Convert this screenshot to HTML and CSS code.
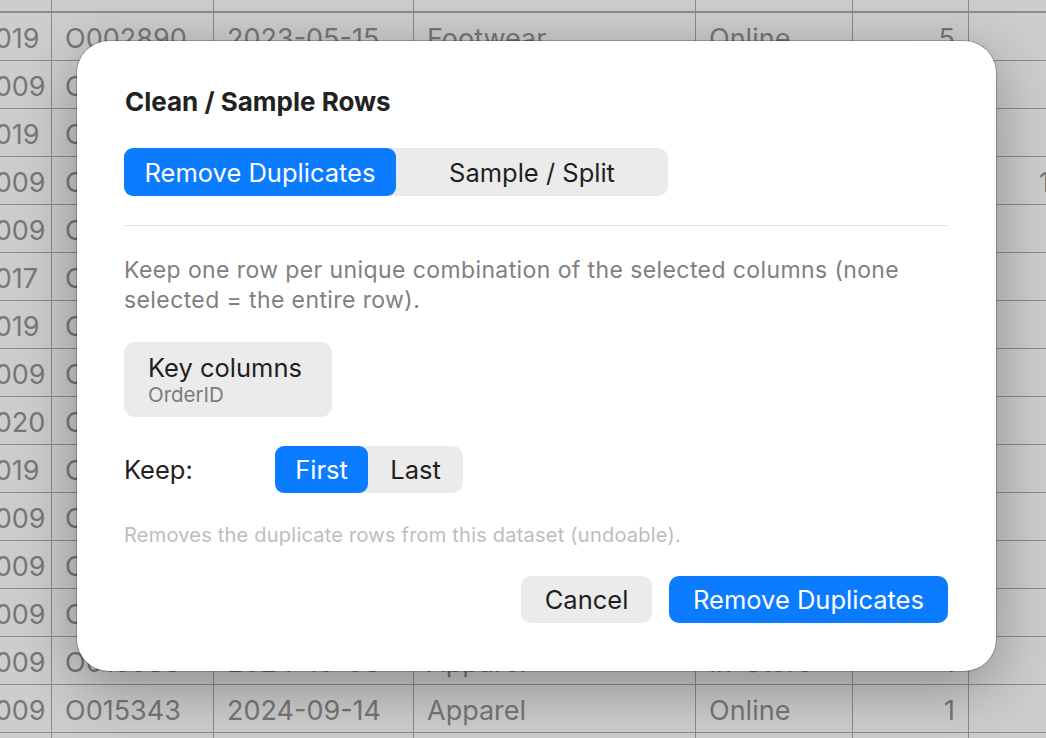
FILE: index.html
```html
<!DOCTYPE html>
<html lang="en">
<head>
<meta charset="utf-8">
<title>Clean / Sample Rows</title>
<link rel="stylesheet" href="styles.css">
</head>
<body>
<div class="backdrop">
  <div class="sheet">
    <div class="row thick"><div class="c r">C1020</div><div class="c">O010866</div><div class="c">2024-12-02</div><div class="c">Home</div><div class="c">Online</div><div class="c r">1</div><div class="c"></div></div>
    <div class="row"><div class="c r">C1019</div><div class="c">O002890</div><div class="c">2023-05-15</div><div class="c">Footwear</div><div class="c">Online</div><div class="c r">5</div><div class="c"></div></div>
    <div class="row"><div class="c r">C1009</div><div class="c">O004512</div><div class="c">2023-07-02</div><div class="c">Home</div><div class="c">Online</div><div class="c r">2</div><div class="c"></div></div>
    <div class="row"><div class="c r">C1019</div><div class="c">O005230</div><div class="c">2023-08-11</div><div class="c">Apparel</div><div class="c">In-Store</div><div class="c r">1</div><div class="c"></div></div>
    <div class="row"><div class="c r">C1009</div><div class="c">O006114</div><div class="c">2023-09-20</div><div class="c">Footwear</div><div class="c">Online</div><div class="c r">3</div><div class="c far">1</div></div>
    <div class="row"><div class="c r">C1009</div><div class="c">O007021</div><div class="c">2023-10-05</div><div class="c">Home</div><div class="c">Online</div><div class="c r">1</div><div class="c"></div></div>
    <div class="row"><div class="c r">C1017</div><div class="c">O008340</div><div class="c">2023-11-18</div><div class="c">Apparel</div><div class="c">Online</div><div class="c r">2</div><div class="c"></div></div>
    <div class="row"><div class="c r">C1019</div><div class="c">O009112</div><div class="c">2024-01-09</div><div class="c">Home</div><div class="c">In-Store</div><div class="c r">1</div><div class="c"></div></div>
    <div class="row"><div class="c r">C1009</div><div class="c">O010254</div><div class="c">2024-02-14</div><div class="c">Footwear</div><div class="c">Online</div><div class="c r">4</div><div class="c"></div></div>
    <div class="row"><div class="c r">C1020</div><div class="c">O011087</div><div class="c">2024-03-22</div><div class="c">Apparel</div><div class="c">Online</div><div class="c r">1</div><div class="c"></div></div>
    <div class="row"><div class="c r">C1019</div><div class="c">O012330</div><div class="c">2024-04-30</div><div class="c">Home</div><div class="c">Online</div><div class="c r">2</div><div class="c"></div></div>
    <div class="row"><div class="c r">C1009</div><div class="c">O013019</div><div class="c">2024-05-17</div><div class="c">Apparel</div><div class="c">In-Store</div><div class="c r">1</div><div class="c"></div></div>
    <div class="row"><div class="c r">C1009</div><div class="c">O013876</div><div class="c">2024-06-25</div><div class="c">Footwear</div><div class="c">Online</div><div class="c r">3</div><div class="c"></div></div>
    <div class="row"><div class="c r">C1009</div><div class="c">O014402</div><div class="c">2024-08-08</div><div class="c">Home</div><div class="c">Online</div><div class="c r">1</div><div class="c"></div></div>
    <div class="row"><div class="c r">C1009</div><div class="c">O015086</div><div class="c">2024-10-06</div><div class="c">Apparel</div><div class="c">In-Store</div><div class="c r">1</div><div class="c"></div></div>
    <div class="row"><div class="c r">C1009</div><div class="c">O015343</div><div class="c">2024-09-14</div><div class="c">Apparel</div><div class="c">Online</div><div class="c r">1</div><div class="c"></div></div>
    <div class="row"><div class="c r">C1009</div><div class="c">O015910</div><div class="c">2024-11-02</div><div class="c">Home</div><div class="c">Online</div><div class="c r">2</div><div class="c"></div></div>
  </div>

  <div class="dialog" role="dialog" aria-label="Clean / Sample Rows">
    <h1 class="title">Clean / Sample Rows</h1>
    <div class="seg seg-main">
      <div class="seg-item on">Remove Duplicates</div>
      <div class="seg-item">Sample / Split</div>
    </div>
    <div class="divider"></div>
    <p class="desc">Keep one row per unique combination of the selected columns (none selected = the entire row).</p>
    <div class="keybtn">
      <span class="keybtn-title">Key columns</span>
      <span class="keybtn-sub">OrderID</span>
    </div>
    <div class="keep">
      <span class="keep-label">Keep:</span>
      <div class="seg seg-keep">
        <div class="seg-item on">First</div>
        <div class="seg-item">Last</div>
      </div>
    </div>
    <p class="note">Removes the duplicate rows from this dataset (undoable).</p>
    <div class="actions">
      <div class="btn btn-cancel">Cancel</div>
      <div class="btn btn-primary">Remove Duplicates</div>
    </div>
  </div>
</div>
</body>
</html>
```

FILE: styles.css
```css
html, body {
  margin: 0;
  padding: 0;
  width: 1046px;
  height: 738px;
  overflow: hidden;
}

body {
  font-family: "Inter", "Liberation Sans", sans-serif;
  background: #cbcbcb;
}

.backdrop {
  position: relative;
  width: 1046px;
  height: 738px;
  overflow: hidden;
  background: #cdcdcd;
}

/* background table */
.sheet {
  margin-top: -35px;
  margin-left: -49px;
}

.row {
  display: grid;
  grid-template-columns: 101px 162px 200px 282px 157px 116px 240px;
  height: 48px;
  box-sizing: border-box;
  border-bottom: 1px solid #8b8b8b;
}

.row.thick {
  border-bottom-width: 2px;
}

.c {
  box-sizing: border-box;
  border-right: 1px solid #8b8b8b;
  padding: 2px 13px 0 13px;
  font-size: 27px;
  line-height: 47px;
  color: #777777;
  white-space: nowrap;
  overflow: hidden;
}

.c.r {
  text-align: right;
}

.c.far {
  padding-left: 70px;
}

/* dialog */
.dialog {
  position: absolute;
  left: 77px;
  top: 41px;
  width: 919px;
  box-sizing: border-box;
  padding: 46px 48px 48px 47px;
  background: #ffffff;
  border-radius: 32px;
  box-shadow: 0 0 0 1px rgba(0, 0, 0, 0.22), 0 16px 60px rgba(0, 0, 0, 0.32);
  display: flex;
  flex-direction: column;
  align-items: flex-start;
  color: #1f1f1f;
}

.title {
  margin: 0 0 0 1px;
  font-size: 26px;
  line-height: 30px;
  font-weight: 700;
  color: #222222;
}

.seg {
  display: flex;
  background: #ebebeb;
  border-radius: 10px;
}

.seg-item {
  display: flex;
  align-items: center;
  justify-content: center;
  font-size: 25.5px;
  color: #1f1f1f;
  border-radius: 9px;
}

.seg-item.on {
  background: #0b7bff;
  color: #ffffff;
}

.seg-main {
  margin-top: 31px;
  height: 48px;
}

.seg-main .seg-item {
  width: 272px;
}

.divider {
  align-self: stretch;
  margin-top: 29px;
  height: 1px;
  background: #e0e0e0;
}

.desc {
  margin: 29px 0 0 0;
  font-size: 23px;
  line-height: 30px;
  letter-spacing: 0.4px;
  color: #808080;
  max-width: 824px;
}

.keybtn {
  margin-top: 27px;
  height: 75px;
  box-sizing: border-box;
  padding: 0 30px 0 24px;
  background: #ebebeb;
  border-radius: 11px;
  display: flex;
  flex-direction: column;
  justify-content: center;
}

.keybtn-title {
  font-size: 25.5px;
  line-height: 30px;
  color: #1f1f1f;
}

.keybtn-sub {
  font-size: 20.5px;
  line-height: 24px;
  color: #7c7c7c;
}

.keep {
  margin-top: 29px;
  display: grid;
  grid-template-columns: 151px auto;
  align-items: center;
}

.keep-label {
  font-size: 25.5px;
  color: #1f1f1f;
}

.seg-keep {
  height: 47px;
}

.seg-keep .seg-item:first-child {
  width: 93px;
}

.seg-keep .seg-item:last-child {
  width: 95px;
}

.note {
  margin: 30px 0 0 0;
  font-size: 20px;
  line-height: 24px;
  letter-spacing: 0.22px;
  color: #bdbdbd;
}

.actions {
  align-self: stretch;
  margin-top: 29px;
  display: flex;
  justify-content: flex-end;
  gap: 17px;
}

.btn {
  height: 47px;
  display: flex;
  align-items: center;
  justify-content: center;
  font-size: 25.5px;
  border-radius: 10px;
}

.btn-cancel {
  width: 131px;
  background: #ebebeb;
  color: #1f1f1f;
}

.btn-primary {
  width: 279px;
  background: #0b7bff;
  color: #ffffff;
}
```
